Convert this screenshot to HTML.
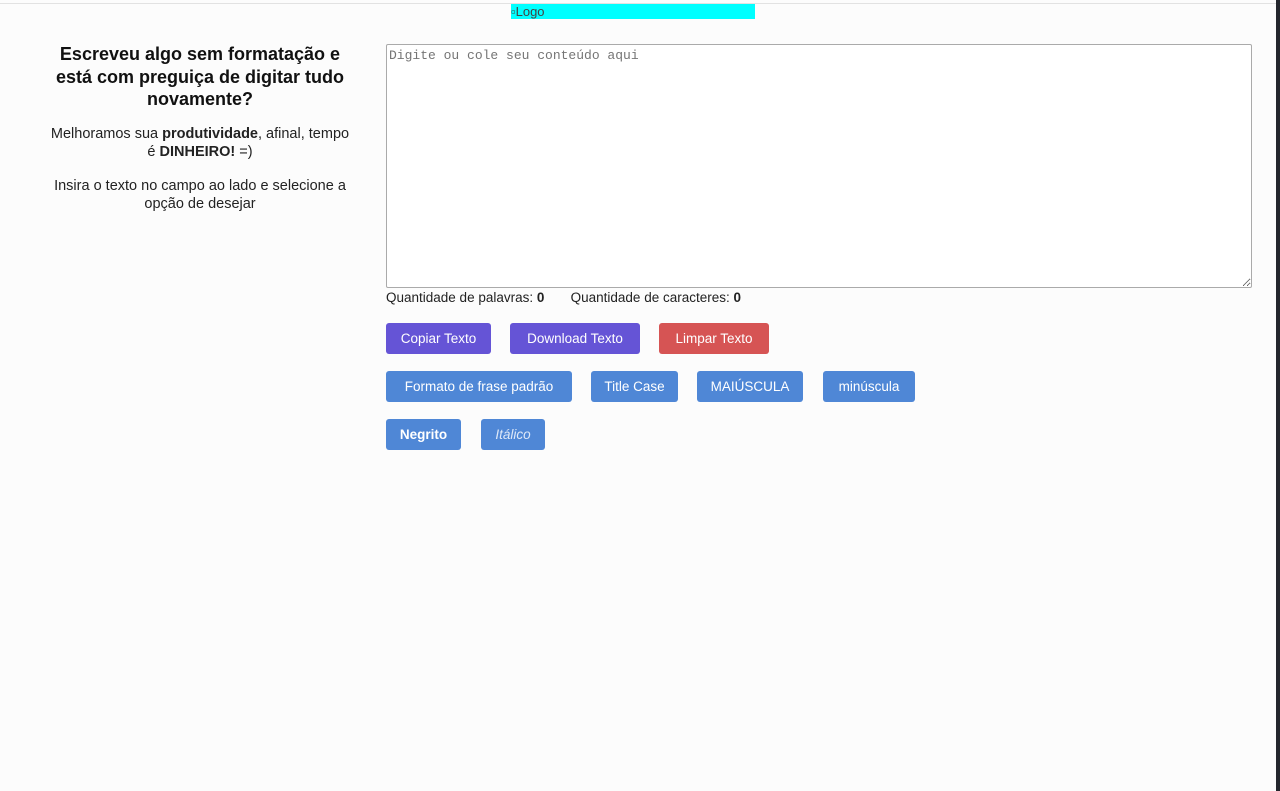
<!DOCTYPE html>
<html><head><meta charset="utf-8"><style>
body{margin:0;width:1280px;height:791px;background:#fcfcfc;font-family:"Liberation Sans",sans-serif;color:#222;position:relative;overflow:hidden}
.top{position:absolute;left:0;top:3px;width:1276px;height:1px;background:#e2e2e2}
.side{position:absolute;right:0;top:0;width:4px;height:791px;background:#24262d}
.logo{position:absolute;left:511px;top:4px;width:244px;height:15px;background:#00ffff;font-size:13px;line-height:15px;color:#444}
.left{position:absolute;left:30px;top:43px;width:340px;text-align:center}
h1{font-size:18px;font-weight:bold;line-height:22.5px;margin:0 0 14px;color:#111}
p{font-size:14.5px;line-height:18px;margin:0 0 16px}
textarea{position:absolute;left:386px;top:44px;width:866px;height:244px;box-sizing:border-box;border:1px solid #aaa;border-radius:2px;background:#fff;font-family:"Liberation Mono",monospace;font-size:13px;padding:3px 2px;color:#777;resize:both}
.cnt{position:absolute;left:386px;top:290px;font-size:13.5px;line-height:16px}
.b{position:absolute;height:31px;line-height:31px;color:#fff;font-size:13.5px;text-align:center;border-radius:3px}
.p{background:#6554d6}.r{background:#d65454}.bl{background:#4f87d6}
</style></head><body>
<div class="top"></div><div class="side"></div>
<div class="logo">▫Logo</div>
<div class="left">
<h1>Escreveu algo sem formatação e<br>está com preguiça de digitar tudo<br>novamente?</h1>
<p>Melhoramos sua <b>produtividade</b>, afinal, tempo<br>é <b>DINHEIRO!</b> =)</p>
<p>Insira o texto no campo ao lado e selecione a<br>opção de desejar</p>
</div>
<textarea placeholder="Digite ou cole seu conteúdo aqui"></textarea>
<div class="cnt">Quantidade de palavras: <b>0</b> &nbsp; &nbsp; &nbsp; Quantidade de caracteres: <b>0</b></div>
<div class="b p" style="left:386px;top:323px;width:105px">Copiar Texto</div>
<div class="b p" style="left:510px;top:323px;width:130px">Download Texto</div>
<div class="b r" style="left:659px;top:323px;width:110px">Limpar Texto</div>
<div class="b bl" style="left:386px;top:371px;width:186px">Formato de frase padrão</div>
<div class="b bl" style="left:591px;top:371px;width:87px">Title Case</div>
<div class="b bl" style="left:697px;top:371px;width:106px">MAIÚSCULA</div>
<div class="b bl" style="left:823px;top:371px;width:92px">minúscula</div>
<div class="b bl" style="left:386px;top:419px;width:75px;font-weight:bold">Negrito</div>
<div class="b bl" style="left:481px;top:419px;width:64px;font-style:italic;color:#dde8f8">Itálico</div>
</body></html>
